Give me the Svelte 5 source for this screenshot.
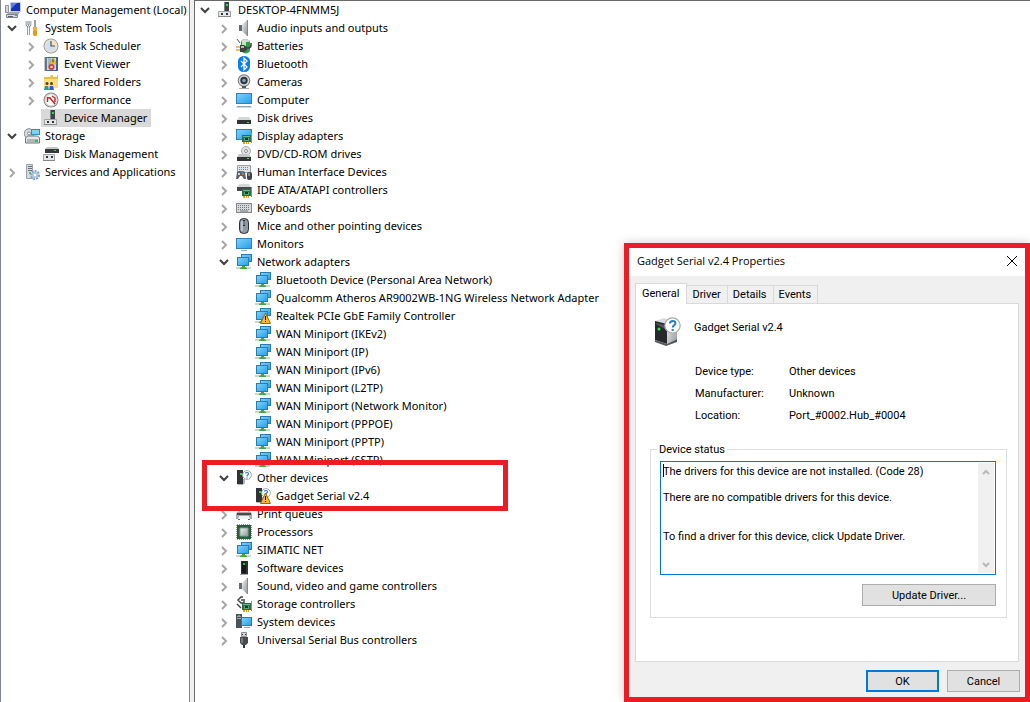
<script lang="ts">
	type TreeItem = {
		label: string;
		icon: string;
		open?: boolean;
		warning?: boolean;
		selected?: boolean;
		marked?: boolean;
		children?: TreeItem[];
	};

	const wan = ['IKEv2', 'IP', 'IPv6', 'L2TP', 'Network Monitor', 'PPPOE', 'PPTP', 'SSTP'];

	let consoleTree = $state<TreeItem[]>([
		{
			label: 'System Tools',
			icon: 'tools',
			open: true,
			children: [
				{ label: 'Task Scheduler', icon: 'clock', children: [] },
				{ label: 'Event Viewer', icon: 'events', children: [] },
				{ label: 'Shared Folders', icon: 'folder', children: [] },
				{ label: 'Performance', icon: 'performance', children: [] },
				{ label: 'Device Manager', icon: 'device', selected: true }
			]
		},
		{
			label: 'Storage',
			icon: 'storage',
			open: true,
			children: [{ label: 'Disk Management', icon: 'diskmgmt' }]
		},
		{ label: 'Services and Applications', icon: 'services', children: [] }
	]);

	let deviceTree = $state<TreeItem[]>([
		{
			label: 'DESKTOP-4FNMM5J',
			icon: 'device',
			open: true,
			children: [
				{ label: 'Audio inputs and outputs', icon: 'speaker', children: [] },
				{ label: 'Batteries', icon: 'battery', children: [] },
				{ label: 'Bluetooth', icon: 'bluetooth', children: [] },
				{ label: 'Cameras', icon: 'camera', children: [] },
				{ label: 'Computer', icon: 'computer', children: [] },
				{ label: 'Disk drives', icon: 'disk', children: [] },
				{ label: 'Display adapters', icon: 'display', children: [] },
				{ label: 'DVD/CD-ROM drives', icon: 'dvd', children: [] },
				{ label: 'Human Interface Devices', icon: 'hid', children: [] },
				{ label: 'IDE ATA/ATAPI controllers', icon: 'ide', children: [] },
				{ label: 'Keyboards', icon: 'keyboard', children: [] },
				{ label: 'Mice and other pointing devices', icon: 'mouse', children: [] },
				{ label: 'Monitors', icon: 'monitor', children: [] },
				{
					label: 'Network adapters',
					icon: 'network',
					open: true,
					children: [
						{ label: 'Bluetooth Device (Personal Area Network)', icon: 'network' },
						{ label: 'Qualcomm Atheros AR9002WB-1NG Wireless Network Adapter', icon: 'network' },
						{ label: 'Realtek PCIe GbE Family Controller', icon: 'network', warning: true },
						...wan.map((name) => ({ label: `WAN Miniport (${name})`, icon: 'network' }))
					]
				},
				{
					label: 'Other devices',
					icon: 'unknown',
					open: true,
					marked: true,
					children: [{ label: 'Gadget Serial v2.4', icon: 'unknown', warning: true }]
				},
				{ label: 'Print queues', icon: 'printer', children: [] },
				{ label: 'Processors', icon: 'cpu', children: [] },
				{ label: 'SIMATIC NET', icon: 'network', children: [] },
				{ label: 'Software devices', icon: 'software', children: [] },
				{ label: 'Sound, video and game controllers', icon: 'speaker', children: [] },
				{ label: 'Storage controllers', icon: 'storagectl', children: [] },
				{ label: 'System devices', icon: 'system', children: [] },
				{ label: 'Universal Serial Bus controllers', icon: 'usb', children: [] }
			]
		}
	]);

	const tabs = ['General', 'Driver', 'Details', 'Events'];
	let activeTab = $state('General');
	let dialogOpen = $state(true);

	const fields = [
		['Device type:', 'Other devices'],
		['Manufacturer:', 'Unknown'],
		['Location:', 'Port_#0002.Hub_#0004']
	];

	const status = [
		'The drivers for this device are not installed. (Code 28)',
		'',
		'There are no compatible drivers for this device.',
		'',
		'',
		'To find a driver for this device, click Update Driver.'
	].join('\n');
</script>

{#snippet card()}
	<path d="M6 7h9v7H6z" fill="#2e6b4a" />
	<path d="M7 8h7v1H7z" fill="#6bb58b" />
	<path d="M8 10h5v3H8z" fill="#59a37a" />
	<path d="M9 10h3v2H9z" fill="#123c28" />
	<path d="M7 14h6v2H7z" fill="#e3a21a" />
	<path d="M9 14h1v2H9zM11 14h1v2h-1z" fill="#fff3c0" />
	<path d="M15 5h1v10h-1z" fill="#8a8f94" />
{/snippet}

{#snippet icon(name: string, warning = false)}
	<svg class="icon" viewBox="0 0 16 16" aria-hidden="true">
		{#if name === 'management'}
			<path d="M5 0h11v10H5z" fill="#c9cdd8" />
			<path d="M6 1h9v8H6z" fill="#1431b8" />
			<path d="M6 1h6l-6 6z" fill="#5d7de8" />
			<path d="M.5 3.5h3v7h-3z" fill="#d3d7de" stroke="#8d929c" />
			<path d="M3 10h12l-2 3H2z" fill="#a2a8b3" />
			<path d="M1.500 12.500h11v3h-11z" fill="#d5d8de" stroke="#7c828e" />
			<path d="M3 14h5v1H3z" fill="#5c626d" />
			<path d="M10 13h2v1h-2z" fill="#36c04a" />
		{:else if name === 'tools'}
			<path d="M3 1v4l1.500 1.500L6 5V1M4.500 7v8" fill="none" stroke="#858b90" stroke-width="2.600" />
			<path d="M3 1v4l1.500 1.500L6 5V1M4.500 7v8" fill="none" stroke="#f1f3f4" stroke-width="1" />
			<path d="M10 0h2v7h-2z" fill="#9aa0a5" />
			<path d="M9 7h4v3l-1 1h-2l-1-1z" fill="#f6b21d" />
			<path d="M10 10h2l1 1v4l-1 1h-2l-1-1v-4z" fill="#e39c13" />
		{:else if name === 'clock'}
			<circle cx="8" cy="8" r="7.500" fill="#8e8e8e" />
			<circle cx="8" cy="8" r="6.700" fill="#e9e2cf" />
			<circle cx="8" cy="8" r="5.400" fill="#d3dfed" />
			<path d="M8 8V3a5 5 0 0 1 5 5z" fill="#f7e5ad" />
			<path d="M8 3v5h4" fill="none" stroke="#44546a" stroke-width="1.200" />
		{:else if name === 'events'}
			<path d="M2 1h13v14H2z" fill="#3d659c" />
			<path d="M4 2h9v12H4z" fill="#cdd9eb" />
			<path d="M5 3h3M5 5h3M5 7h3M5 9h3M5 11h3" stroke="#7f95b1" />
			<path d="M1 2h3M1 4h3M1 6h3M1 8h3M1 10h3M1 12h3M1 14h3" stroke="#8a8a8a" />
			<path d="M10 1.500L13.500 8h-7z" fill="#ffd21c" stroke="#a77f00" stroke-width=".5" />
			<path d="M10 3.500v3" stroke="#222" />
			<circle cx="8.500" cy="11" r="3" fill="#d63b38" />
			<path d="M7.500 10l2 2m0-2l-2 2" stroke="#fff" />
		{:else if name === 'folder'}
			<path d="M1 3h6l1-2h7v13H1z" fill="#e8bd4a" />
			<path d="M1 5h14v9H1z" fill="#f9dd85" />
			<path d="M10 1h4v2h-4z" fill="#fff" />
			<circle cx="4" cy="9.500" r="1.500" fill="#5b3d25" />
			<circle cx="8.500" cy="9.500" r="1.500" fill="#5b3d25" />
			<path d="M1 16l1-4h3l1 4z" fill="#2d9a8e" />
			<path d="M6 16l1-4h3l1 4z" fill="#2f62b5" />
		{:else if name === 'performance'}
			<circle cx="8" cy="8" r="7.500" fill="#777" />
			<circle cx="8" cy="8" r="6.700" fill="#d4d4d4" />
			<circle cx="8" cy="8" r="5.400" fill="#fff" />
			<path d="M4.500 10V5.500L7 6l5 6M9 4l3 2v4" fill="none" stroke="#c61f1f" stroke-width="1.400" />
		{:else if name === 'device'}
			<path d="M7 0h5v10H7z" fill="#3f4347" />
			<path d="M7 0h1v10H7z" fill="#7d8286" />
			<path d="M9 2h2v2H9z" fill="#2bdc4f" />
			<path d="M1.500 9.500h12v5h-12z" fill="#e4e6e7" stroke="#a0a4a7" />
			<path d="M4 11h2v2H4zM9 11h2v2H9z" fill="#33373a" />
			<path d="M1 14h13v1H1z" fill="#85898c" />
		{:else if name === 'storage'}
			<circle cx="5" cy="5.500" r="4.800" fill="#d7dbdd" stroke="#83898e" />
			<circle cx="5" cy="5.500" r="1.500" fill="#fff" stroke="#83898e" />
			<path d="M7 1h9v6H7z" fill="#2d8fb8" />
			<path d="M8 2h7v4H8z" fill="#7fd3ee" />
			<path d="M1.500 10l2-2h10l2 2v5h-14z" fill="#e4e6e7" stroke="#6f7477" />
			<path d="M3 11h11v3H3z" fill="#b2b5b7" />
			<path d="M11 12h3v2h-3z" fill="#1fc83a" />
		{:else if name === 'diskmgmt'}
			<path d="M2 3l2-2h10l2 2z" fill="#c6c9cb" />
			<path d="M2 3h14v4H2z" fill="#35393c" />
			<path d="M11 4h2v1h-2z" fill="#31d24f" />
			<path d="M.5 8.500h11v6H.5z" fill="#e4e6e7" stroke="#a0a4a7" />
			<path d="M3 10h2v2H3zM8 10h2v2H8z" fill="#33373a" />
			<path d="M0 14h12v1H0z" fill="#85898c" />
		{:else if name === 'services'}
			<path d="M2.500.5h6v14h-6z" fill="#d5dade" stroke="#9aa2a8" />
			<path d="M4 2.500h4M4 4.500h4M4 6.500h4" stroke="#697177" />
			<path d="M5 8h2v2H5z" fill="#50bd5a" />
			<circle cx="11" cy="11" r="4" fill="none" stroke="#7ba2c8" stroke-width="2" stroke-dasharray="2 1" />
			<circle cx="11" cy="11" r="3.200" fill="#a9c5e1" />
			<circle cx="11" cy="11" r="1.300" fill="#fff" />
		{:else if name === 'speaker'}
			<path d="M3 5h3v6H3z" fill="#676b70" />
			<path d="M6 5l5-5v16l-5-5z" fill="url(#metal)" />
			<path d="M11 0h1v16h-1z" fill="#84888c" />
		{:else if name === 'battery'}
			<path d="M5 3q4-4 9 0v10q-4 5-9 0z" fill="#2da044" />
			<path d="M5 3q4-4 9 0l-1 1H6z" fill="#d5d9dc" />
			<path d="M6 4h4v6H6z" fill="#b6efad" />
			<path d="M1 1l3 4" stroke="#50565c" />
			<path d="M0 9h5M0 12h5" stroke="#e7ad25" stroke-width="1.500" />
			<path d="M4 7h4l3 2v3l-3 2H4z" fill="#394046" />
			<path d="M5 8h3v2H5z" fill="#b5babd" />
			<path d="M11 10h1q3 0 3-3V5" fill="none" stroke="#394046" stroke-width="1.500" />
		{:else if name === 'bluetooth'}
			<rect x="2" width="12" height="16" rx="5.500" fill="#087ef0" />
			<path d="M5 5l6 6-3 3V2l3 3-6 6" fill="none" stroke="#fff" stroke-width="1.300" />
		{:else if name === 'camera'}
			<circle cx="8" cy="6.500" r="6.300" fill="#777b7f" />
			<circle cx="8" cy="6.500" r="5.300" fill="#d7d9dc" />
			<circle cx="8" cy="6.500" r="3.700" fill="#30353c" />
			<circle cx="8" cy="6.500" r="1.800" fill="#7a9dc3" />
			<path d="M6 12h4v2H6z" fill="#565a5e" />
			<path d="M3 14h10v1H3z" fill="#a7abae" />
		{:else if name === 'computer'}
			<path d="M0 1h16v11H0z" fill="#3182b5" />
			<path d="M1 2h14v9H1z" fill="url(#screen)" />
			<path d="M1 14h14v1H1z" fill="#8aa9bd" />
			<path d="M0 15h16v1H0z" fill="#cbd8df" />
		{:else if name === 'disk'}
			<path d="M3 7h10l2 3H1z" fill="#d5d8d9" />
			<path d="M1 10h14v4H1z" fill="#303336" />
			<path d="M11 12h2v1h-2z" fill="#35de4e" />
		{:else if name === 'display'}
			<path d="M0 1h16v11H0z" fill="#3182b5" />
			<path d="M1 2h14v9H1z" fill="url(#screen)" />
			{@render card()}
		{:else if name === 'dvd'}
			<circle cx="10" cy="5" r="4.500" fill="#e0e2e3" stroke="#a9adaf" />
			<circle cx="10" cy="5" r="1.500" fill="#fff" stroke="#888d90" />
			<path d="M3 8h10l2 3H1z" fill="#c3c6c7" />
			<path d="M1 11h14v4H1z" fill="#303336" />
			<path d="M11 12h2v1h-2z" fill="#35de4e" />
		{:else if name === 'hid'}
			<path d="M1.500 1.500h13v7h-13z" fill="#e0e2e4" stroke="#9da1a4" />
			<path d="M3 3.500h10M3 5.500h10" stroke="#808589" stroke-dasharray="1 1" />
			<path d="M0 15l1-7 2-1h4l2 1 1 7H8l-2-3H4l-2 3z" fill="#5b626a" />
			<path d="M2 9h2v2H2z" fill="#ccd2d7" />
			<circle cx="6" cy="8" r="1" fill="#2999e9" />
			<circle cx="7" cy="10" r="1" fill="#e27c24" />
			<rect x="11" y="8" width="5" height="8" rx="2" fill="#3d444d" />
			<path d="M13 9v3" stroke="#c7cdd2" />
		{:else if name === 'ide'}
			<path d="M3 2h10l2 3H1z" fill="#d5d8d9" />
			<path d="M1 5h14v4H1z" fill="#45494c" />
			{@render card()}
		{:else if name === 'keyboard'}
			<path d="M0 3h16v10H0z" fill="#85898d" />
			<path d="M1 4h14v8H1z" fill="#d6d8da" />
			<path d="M2 5.500h12M2 7.500h12M2 9.500h12" stroke="#73787d" stroke-dasharray="1 1" />
			<path d="M4 11h8" stroke="#73787d" />
		{:else if name === 'mouse'}
			<rect x="3.500" y=".5" width="9" height="15" rx="4" fill="#8d99a5" stroke="#272c32" />
			<path d="M5 3h2v10H5z" fill="#b9c2ca" />
			<path d="M7 2h2v6H7z" fill="#22282d" />
			<path d="M8 3v4" stroke="#c6cdd3" />
		{:else if name === 'monitor'}
			<path d="M0 2h16v11H0z" fill="#3182b5" />
			<path d="M1 3h14v9H1z" fill="url(#screen)" />
			<path d="M5 14h6v1H5z" fill="#8bb2c9" />
		{:else if name === 'network'}
			<path d="M5 0h11v8H5z" fill="#2a7cb0" />
			<path d="M6 1h9v6H6z" fill="url(#screen)" />
			<path d="M1 3h12v9H1z" fill="#2a7cb0" />
			<path d="M2 4h10v7H2z" fill="url(#screen)" />
			<path d="M0 13h15v2H0z" fill="#d0d3d5" />
			<path d="M6 12h3v1l2 1v1H4v-1l2-1z" fill="#3dab49" />
		{:else if name === 'unknown'}
			<path d="M1 0h6v14H1z" fill="#303438" />
			<path d="M7 9h2v4l-2 2H2l-1-1h6z" fill="#aeb2b5" />
			<path d="M4 3h2v2H4z" fill="#27d943" />
			<circle cx="11" cy="5" r="4.400" fill="#fff" stroke="#a6aaad" />
			<path d="M9.500 3.500q0-1 1.500-1t1.500 1.200q0 .8-1.400 1.800v1M11 7.500v1" fill="none" stroke="#2880bd" stroke-width="1.200" />
		{:else if name === 'printer'}
			<path d="M3 1h10v6H3z" fill="#fff" stroke="#989da0" />
			<path d="M1 6h14l1 2v5H0V8z" fill="#a5a9ab" />
			<path d="M1 7h14v2H1z" fill="#474b4f" />
			<path d="M3 10h10l1 3H2z" fill="#f0f1f1" />
			<path d="M2 13h2v1H2zM12 13h2v1h-2z" fill="#606467" />
		{:else if name === 'cpu'}
			<path d="M1 .5h14M1 15.500h14M.5 1v14M15.500 1v14" stroke="#b59b3c" stroke-dasharray="1 1" />
			<path d="M1 1h14v14H1z" fill="#2b5a46" />
			<path d="M4 4h8v8H4z" fill="url(#metal)" stroke="#7ca28e" />
		{:else if name === 'software'}
			<path d="M5 1h7v13H5z" fill="#303438" />
			<path d="M6 2h4v11H6z" fill="#171a1c" />
			<path d="M7 3h2v2H7z" fill="#25d53b" />
			<path d="M4 14h8v1H4z" fill="#a3a7a9" />
		{:else if name === 'storagectl'}
			<path d="M7 1H5L2 4l3 3h3V5M5 4h4" fill="none" stroke="#41474b" stroke-width="1.500" />
			<path d="M1 8l4 4" stroke="#41474b" stroke-width="1.500" />
			{@render card()}
		{:else if name === 'system'}
			<path d="M0 0h6v14H0z" fill="#4a5257" />
			<path d="M1 2h4v1H1zM1 4h4v1H1z" fill="#a0a6aa" />
			<path d="M2 1h2v1H2z" fill="#37d34b" />
			<path d="M5 3h11v9H5z" fill="#2a7cb0" />
			<path d="M6 4h9v7H6z" fill="url(#screen)" />
			<path d="M8 13h6v1H8z" fill="#8aa9bd" />
		{:else if name === 'usb'}
			<path d="M5.500.5h5v4h-5z" fill="#d0d3d5" stroke="#8b8f92" />
			<path d="M6 2h1v1H6zM9 2h1v1H9z" fill="#33373a" />
			<path d="M4 5h8v6l-2 2H6l-2-2z" fill="#484c50" />
			<path d="M5 6h2v5H5z" fill="#7a7e82" />
			<path d="M8 13v3" stroke="#303438" stroke-width="2" />
		{/if}
		{#if warning}
			<path d="M10.500 5l5 10.500h-10z" fill="#f7b928" stroke="#9a6713" />
			<path d="M10 8h1v4h-1zM10 13h1v1h-1z" fill="#111" />
		{/if}
	</svg>
{/snippet}

{#snippet branch(items: TreeItem[])}
	<ul class="branch">
		{#each items as item}
			<li class:marked={item.marked}>
				<div class="row">
					{#if item.children}
						<button
							class="chevron"
							class:open={item.open}
							aria-label="Toggle {item.label}"
							aria-expanded={!!item.open}
							onclick={() => (item.open = !item.open)}
						>
							<svg viewBox="0 0 16 16" aria-hidden="true">
								<polyline points={item.open ? '4,6 8,10 12,6' : '6,5 10,9 6,13'} />
							</svg>
						</button>
					{:else}
						<span class="chevron"></span>
					{/if}
					<button class="node" class:selected={item.selected}>
						{@render icon(item.icon, item.warning)}
						{item.label}
					</button>
				</div>
				{#if item.open && item.children?.length}
					{@render branch(item.children)}
				{/if}
			</li>
		{/each}
	</ul>
{/snippet}

<svg class="defs" aria-hidden="true">
	<defs>
		<linearGradient id="screen" x1="0" y1="0" x2="1" y2="1">
			<stop offset="0" stop-color="#7cd0fa" />
			<stop offset="1" stop-color="#27a1ee" />
		</linearGradient>
		<linearGradient id="metal" x1="0" y1="0" x2="1" y2="1">
			<stop offset="0" stop-color="#f1f2f3" />
			<stop offset="1" stop-color="#93979b" />
		</linearGradient>
	</defs>
</svg>

<main class="console">
	<nav class="pane pane--console" aria-label="Console tree">
		<button class="node">
			{@render icon('management')}
			Computer Management (Local)
		</button>
		{@render branch(consoleTree)}
	</nav>

	<section class="pane pane--devices" aria-label="Devices">
		{@render branch(deviceTree)}
	</section>

	{#if dialogOpen}
		<div class="dialog" role="dialog" aria-labelledby="dialog-title">
			<header class="titlebar">
				<span id="dialog-title">Gadget Serial v2.4 Properties</span>
				<button class="close" aria-label="Close" onclick={() => (dialogOpen = false)}>
					<svg viewBox="0 0 12 12" aria-hidden="true">
						<path d="M1 1l10 10M11 1L1 11" />
					</svg>
				</button>
			</header>

			<div class="dialog-body">
				<div class="tabs" role="tablist">
					{#each tabs as tab}
						<button
							class="tab"
							class:active={activeTab === tab}
							role="tab"
							aria-selected={activeTab === tab}
							onclick={() => (activeTab = tab)}
						>
							{tab}
						</button>
					{/each}
				</div>

				<div class="panel" role="tabpanel">
					<div class="device">
						<svg class="device-icon" viewBox="0 0 28 30" aria-hidden="true">
							<path d="M1 4l9-3 13 3-10 4z" fill="#d9dbdc" />
							<path d="M1 4l12 3v20L1 23z" fill="#26292b" />
							<path d="M13 7l10-3v18l-10 5z" fill="url(#metal)" />
							<path d="M1 23l12 4 10-5v3l-11 4-11-4z" fill="#55595c" />
							<path d="M2 6l9 2v4L2 7z" fill="#53585b" />
							<circle cx="5" cy="12" r="1.500" fill="#37e34f" />
							<circle cx="18.500" cy="8.500" r="7.700" fill="#fff" stroke="#a5a9ab" stroke-width="1.200" />
							<path d="M16 6.500q0-2.500 2.700-2.500t2.700 2.300q0 1.200-1.400 2.100-1.200.8-1.200 2.100M18.700 12v2" fill="none" stroke="#2380bd" stroke-width="2" />
						</svg>
						<span>Gadget Serial v2.4</span>
					</div>

					<dl class="fields">
						{#each fields as [name, value]}
							<dt>{name}</dt>
							<dd>{value}</dd>
						{/each}
					</dl>

					<fieldset class="group">
						<legend><label for="status">Device status</label></legend>
						<div class="status">
							<textarea id="status" readonly value={status}></textarea>
							<div class="scrollbar">
								<button aria-label="Scroll up">
									<svg viewBox="0 0 8 6" aria-hidden="true"><polyline points="1,5 4,2 7,5" /></svg>
								</button>
								<button aria-label="Scroll down">
									<svg viewBox="0 0 8 6" aria-hidden="true"><polyline points="1,1 4,4 7,1" /></svg>
								</button>
							</div>
							<span class="caret"></span>
						</div>
						<button class="btn btn--wide">Update Driver...</button>
					</fieldset>
				</div>

				<footer class="actions">
					<button class="btn btn--default" onclick={() => (dialogOpen = false)}>OK</button>
					<button class="btn" onclick={() => (dialogOpen = false)}>Cancel</button>
				</footer>
			</div>
		</div>
	{/if}
</main>

<style>
	:global(body) {
		margin: 0;
		background: #fff;
	}

	button {
		margin: 0;
		padding: 0;
		border: none;
		background: none;
		color: inherit;
		font: inherit;
	}

	.defs {
		position: absolute;
		width: 0;
		height: 0;
	}

	.console {
		position: relative;
		display: flex;
		gap: 4px;
		min-height: 100vh;
		background: #f0f0f0;
		color: #000;
		font: 11px/18px 'Noto Sans', 'Open Sans', sans-serif;
		overflow: hidden;
	}

	.pane {
		box-sizing: border-box;
		padding-top: 1px;
		background: #fff;
		overflow: hidden;
	}

	.pane--console {
		flex: 0 0 190px;
		border-left: 1px solid #828790;
		border-right: 1px solid #828790;
		padding-left: 3px;
	}

	.pane--console > .node {
		padding-left: 1px;
	}

	.pane--devices {
		flex: 1;
		border-left: 1px solid #696969;
		border-top: 1px solid #696969;
		padding-top: 0;
		padding-left: 2px;
	}

	/* Trees */
	.branch {
		margin: 0;
		padding: 0;
		list-style: none;
	}

	.branch .branch {
		padding-left: 19px;
	}

	.row {
		display: flex;
		height: 18px;
	}

	.chevron {
		flex: none;
		width: 18px;
		height: 18px;
	}

	.chevron svg {
		display: block;
		width: 16px;
		height: 16px;
		fill: none;
		stroke: #a6a6a6;
		stroke-width: 2;
	}

	.chevron.open svg {
		stroke: #404040;
	}

	.node {
		display: flex;
		align-items: center;
		gap: 5px;
		height: 18px;
		padding: 0 4px 0 2px;
		white-space: nowrap;
	}

	.node.selected {
		background: #d9d9d9;
	}

	.icon {
		flex: none;
		width: 16px;
		height: 16px;
	}

	.marked {
		position: relative;
	}

	.marked::after {
		content: '';
		position: absolute;
		top: -9px;
		bottom: -6px;
		left: -14px;
		box-sizing: border-box;
		width: 306px;
		border: 5px solid #ed1c24;
		pointer-events: none;
	}

	/* Properties dialog */
	.dialog {
		position: absolute;
		right: 0;
		bottom: 0;
		box-sizing: border-box;
		width: 406px;
		border: 5px solid #ed1c24;
		background: #f0f0f0;
		box-shadow: 0 0 10px rgba(0, 0, 40, 0.2);
		font: 11px/13px Roboto, 'Liberation Sans', sans-serif;
	}

	.titlebar {
		display: flex;
		align-items: center;
		justify-content: space-between;
		box-sizing: border-box;
		height: 28px;
		padding: 0 7px 2px 8px;
		background: #fff;
		font: 11px/18px 'Open Sans', 'Noto Sans', sans-serif;
	}

	.close svg {
		display: block;
		width: 12px;
		height: 12px;
		stroke: #000;
	}

	.dialog-body {
		padding: 7px 5px 5px 6px;
	}

	.tabs {
		display: flex;
		align-items: flex-end;
	}

	.tab {
		height: 18px;
		padding: 0 6px 0 5px;
		border: 1px solid #d9d9d9;
		border-bottom: none;
		border-left: none;
	}

	.tab.active {
		position: relative;
		height: 21px;
		margin-bottom: -1px;
		padding: 0 7px 2px 6px;
		border-left: 1px solid #d9d9d9;
		background: #fff;
	}

	.panel {
		margin-right: 1px;
		padding: 13px 11px 43px 14px;
		border: 1px solid #d9d9d9;
		background: #fff;
	}

	.device {
		display: flex;
		gap: 12px;
		padding-left: 4px;
	}

	.device span {
		padding-top: 4px;
	}

	.device-icon {
		width: 28px;
		height: 30px;
	}

	.fields {
		display: grid;
		grid-template-columns: 94px 1fr;
		row-gap: 9px;
		margin: 18px 0 0 45px;
	}

	.fields dd {
		margin: 0;
	}

	.group {
		min-width: 0;
		margin: 21px 0 0;
		padding: 5px 10px 11px 9px;
		border: 1px solid #dcdcdc;
	}

	.group legend {
		margin-left: -3px;
		padding: 0 2px;
	}

	.status {
		position: relative;
		display: flex;
		padding: 1px;
		border: 1px solid #0078d7;
	}

	textarea {
		flex: 1;
		box-sizing: border-box;
		height: 110px;
		margin: 0;
		padding: 2px 1px;
		border: none;
		outline: none;
		resize: none;
		overflow: hidden;
		color: inherit;
		font: inherit;
	}

	.caret {
		position: absolute;
		top: 2px;
		left: 2px;
		width: 1px;
		height: 13px;
		background: #000;
	}

	.scrollbar {
		display: flex;
		flex-direction: column;
		justify-content: space-between;
		width: 16px;
		background: #f0f0f0;
	}

	.scrollbar button {
		height: 17px;
	}

	.scrollbar svg {
		display: block;
		width: 8px;
		height: 6px;
		margin: 0 auto;
		fill: none;
		stroke: #b8b8b8;
		stroke-width: 2;
	}

	.btn {
		box-sizing: border-box;
		width: 73px;
		height: 22px;
		border: 1px solid #adadad;
		background: #e1e1e1;
	}

	.btn--wide {
		display: block;
		width: 134px;
		margin: 9px 0 0 auto;
	}

	.btn--default {
		border: 2px solid #0078d7;
	}

	.actions {
		display: flex;
		justify-content: flex-end;
		gap: 8px;
		padding-top: 8px;
	}
</style>
